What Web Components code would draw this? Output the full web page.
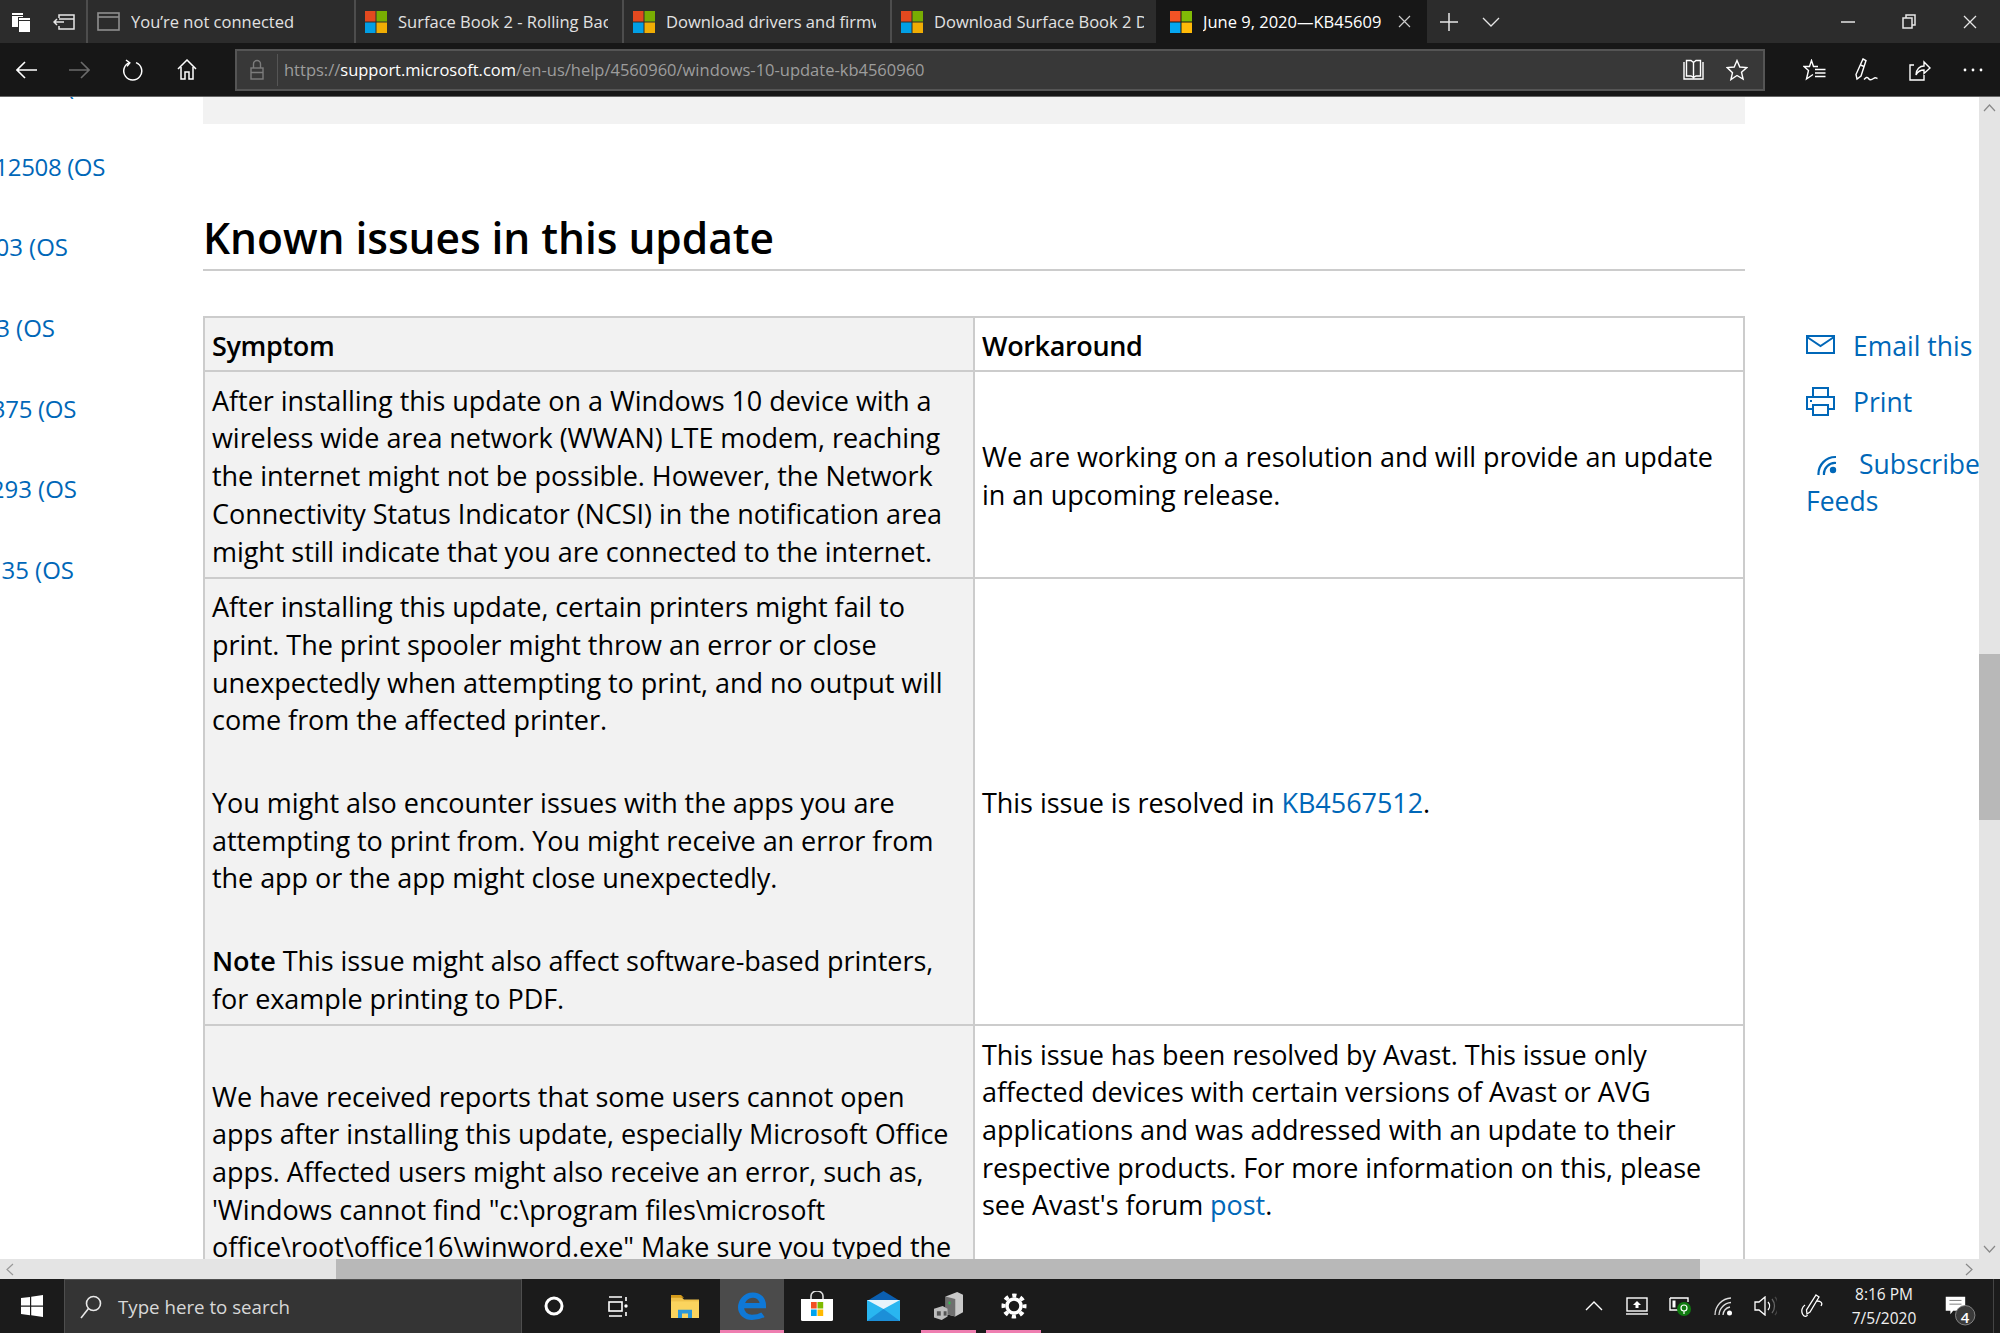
<!DOCTYPE html>
<html>
<head>
<meta charset="utf-8">
<title>Known issues</title>
<style>
  html, body { margin: 0; padding: 0; height: 100%; overflow: hidden; background: #fff; }
  body { font-family: "Open Sans", "Noto Sans", sans-serif; display: flex; flex-direction: column; height: 1333px; width: 2000px; }
  a { color: #0067b8; text-decoration: none; }
  p { margin: 0 0 45px; }
  p:last-child { margin-bottom: 0; }
  b { font-weight: 600; }
  nav-bar b { font-weight: 400; color: #fff; }
</style>
</head>
<body>

<tab-strip>
  <icon-btn w="42" slot="left" name="tabs"></icon-btn>
  <icon-btn w="44" slot="left" name="tabback"></icon-btn>
  <browser-tab name="window" sep>You’re not connected</browser-tab>
  <browser-tab name="ms" sep>Surface Book 2 - Rolling Back</browser-tab>
  <browser-tab name="ms" sep>Download drivers and firmware</browser-tab>
  <browser-tab name="ms" wide>Download Surface Book 2 Dr</browser-tab>
  <browser-tab name="ms" active>June 9, 2020—KB45609</browser-tab>
  <icon-btn w="44" name="plus"></icon-btn>
  <icon-btn w="40" name="chev"></icon-btn>
  <icon-btn w="61" slot="right" name="min"></icon-btn>
  <icon-btn w="61" slot="right" name="restore"></icon-btn>
  <icon-btn w="61" slot="right" name="close"></icon-btn>
</tab-strip>

<nav-bar>
  <icon-btn w="53" h="53" name="back" slot="nav"></icon-btn>
  <icon-btn w="53" h="53" name="forward" slot="nav"></icon-btn>
  <icon-btn w="54" h="53" name="refresh" slot="nav"></icon-btn>
  <icon-btn w="53" h="53" name="home" slot="nav"></icon-btn>
  <span slot="url">https://<b>support.microsoft.com</b>/en-us/help/4560960/windows-10-update-kb4560960</span>
  <icon-btn w="43" h="40" name="reading" slot="inbox"></icon-btn>
  <icon-btn w="43" h="40" name="star" slot="inbox"></icon-btn>
  <icon-btn w="52" h="53" name="favlist" slot="tools"></icon-btn>
  <icon-btn w="53" h="53" name="inkpen" slot="tools"></icon-btn>
  <icon-btn w="53" h="53" name="share" slot="tools"></icon-btn>
  <icon-btn w="54" h="53" name="dots" slot="tools"></icon-btn>
</nav-bar>

<page-view>
  <side-nav slot="nav">
    <nav-link w="106">(OS</nav-link>
    <nav-link w="105" style="letter-spacing:-0.35px">12508 (OS</nav-link>
    <nav-link w="68">03 (OS</nav-link>
    <nav-link w="55">3 (OS</nav-link>
    <nav-link w="76" style="letter-spacing:-0.3px">375 (OS</nav-link>
    <nav-link w="77">293 (OS</nav-link>
    <nav-link w="74">35 (OS</nav-link>
  </side-nav>

  <article-body slot="main">
    <issue-table>
      <issue-row head>
        <span slot="symptom">Symptom</span>
        <span slot="workaround">Workaround</span>
      </issue-row>
      <issue-row>
        <div slot="symptom">After installing this update on a Windows 10 device with a<br>wireless wide area network (WWAN) LTE modem, reaching<br>the internet might not be possible. However, the Network<br>Connectivity Status Indicator (NCSI) in the notification area<br>might still indicate that you are connected to the internet.</div>
        <div slot="workaround">We are working on a resolution and will provide an update<br>in an upcoming release.</div>
      </issue-row>
      <issue-row>
        <div slot="symptom">
          <p>After installing this update, certain printers might fail to<br>print. The print spooler might throw an error or close<br>unexpectedly when attempting to print, and no output will<br>come from the affected printer.</p>
          <p>You might also encounter issues with the apps you are<br>attempting to print from. You might receive an error from<br>the app or the app might close unexpectedly.</p>
          <p><b>Note</b> This issue might also affect software-based printers,<br>for example printing to PDF.</p>
        </div>
        <div slot="workaround">This issue is resolved in <a>KB4567512</a>.</div>
      </issue-row>
      <issue-row top>
        <div slot="symptom" class="lead">We have received reports that some users cannot open<br>apps after installing this update, especially Microsoft Office<br>apps. Affected users might also receive an error, such as,<br>'Windows cannot find "c:\program files\microsoft<br>office\root\office16\winword.exe" Make sure you typed the</div>
        <div slot="workaround">This issue has been resolved by Avast. This issue only<br>affected devices with certain versions of Avast or AVG<br>applications and was addressed with an update to their<br>respective products. For more information on this, please<br>see Avast's forum <a>post</a>.</div>
      </issue-row>
    </issue-table>
  </article-body>

  <share-links slot="aside"></share-links>
</page-view>

<h-scroll></h-scroll>

<task-bar>
  <task-slot w="64" name="win"></task-slot>
  <search-box></search-box>
  <task-slot w="64" name="cortana"></task-slot>
  <task-slot w="64" name="taskview"></task-slot>
  <task-slot w="70" name="explorer"></task-slot>
  <task-slot w="64" name="edge" active open="0"></task-slot>
  <task-slot w="66" name="store"></task-slot>
  <task-slot w="66" name="mail"></task-slot>
  <task-slot w="65" name="appbox" open="5"></task-slot>
  <task-slot w="65" name="gear" open="5"></task-slot>
  <task-slot w="42" name="caret" slot="tray"></task-slot>
  <task-slot w="43" name="screen" slot="tray"></task-slot>
  <task-slot w="44" name="battery" slot="tray"></task-slot>
  <task-slot w="42" name="wifi" slot="tray"></task-slot>
  <task-slot w="42" name="volume" slot="tray"></task-slot>
  <task-slot w="52" name="pen" slot="tray"></task-slot>
  <tray-clock slot="tray"></tray-clock>
  <task-slot w="50" name="notify" slot="tray"></task-slot>
</task-bar>

<script>
const msLogo = (a, b, c, d) => `<svg width="22" height="22" viewBox="0 0 22 22"><rect width="10.5" height="10.5" fill="${a}"/><rect x="11.5" width="10.5" height="10.5" fill="${b}"/><rect y="11.5" width="10.5" height="10.5" fill="${c}"/><rect x="11.5" y="11.5" width="10.5" height="10.5" fill="${d}"/></svg>`;

const line = 'fill="none" stroke="currentColor"';

const ICONS = {
  tabs: `<svg width="20" height="20" viewBox="0 0 20 20"><path d="M1 1h11v4h-5v10H1z" fill="#fff"/><path d="M8 6h11v14H8z" fill="#fff"/><path d="M8 8.5h11" stroke="#2b2b2b"/><path d="M1 3.5h11" stroke="#2b2b2b"/></svg>`,
  tabback: `<svg width="22" height="16" viewBox="0 0 22 16" ${line} stroke-width="1.5"><path d="M6 4V1h15v14H6v-3"/><path d="M6 5h15"/><path d="M11 8H1M4 5L1 8l3 3"/></svg>`,
  window: `<svg width="23" height="19" viewBox="0 0 23 19" fill="none" stroke="#8f8f8f" stroke-width="1.6"><rect x="1" y="1" width="21" height="17"/><path d="M1 5h21"/></svg>`,
  ms: msLogo('#e2491f', '#78ad02', '#029fe5', '#f0ad04'),
  msOn: msLogo('#f35325', '#81bc06', '#05a6f0', '#ffba08'),
  plus: `<svg width="18" height="18" viewBox="0 0 18 18" ${line} stroke-width="1.5"><path d="M9 0v18M0 9h18"/></svg>`,
  chev: `<svg width="18" height="10" viewBox="0 0 18 10" ${line} stroke-width="1.3"><path d="M1 1l8 8 8-8"/></svg>`,
  min: `<svg width="14" height="2" viewBox="0 0 14 2" ${line} stroke-width="1.5"><path d="M0 1h14"/></svg>`,
  restore: `<svg width="14" height="15" viewBox="0 0 14 15" ${line} stroke-width="1.5"><rect x="1" y="4" width="9" height="10"/><path d="M4 4V1h9v10h-3"/></svg>`,
  close: `<svg width="14" height="14" viewBox="0 0 14 14" ${line} stroke-width="1.3"><path d="M1 1l12 12M13 1L1 13"/></svg>`,
  smallx: `<svg width="13" height="13" viewBox="0 0 13 13" ${line} stroke-width="1.2"><path d="M1 1l11 11M12 1L1 12"/></svg>`,
  back: `<svg width="21" height="18" viewBox="0 0 21 18" fill="none" stroke="#fff" stroke-width="1.6"><path d="M21 9H1M9 1L1 9l8 8"/></svg>`,
  forward: `<svg width="21" height="18" viewBox="0 0 21 18" fill="none" stroke="#6b6b6b" stroke-width="1.6"><path d="M0 9h20M12 1l8 8-8 8"/></svg>`,
  refresh: `<svg width="20" height="22" viewBox="0 0 20 22" fill="none" stroke="#fff" stroke-width="1.5"><path d="M13 3.6a9 9 0 1 1-6.5 0"/><path d="M3 1l3.8 2.8L4 7.4"/></svg>`,
  home: `<svg width="20" height="21" viewBox="0 0 20 21" fill="none" stroke="#fff" stroke-width="1.5"><path d="M1 10l9-9 9 9"/><path d="M4 8v12h4v-7h4v7h4V8"/></svg>`,
  lock: `<svg width="14" height="21" viewBox="0 0 14 21" fill="none" stroke="#7c7c7c" stroke-width="1.4"><rect x="1" y="9" width="12" height="11"/><path d="M3.5 9V5a3.5 3.5 0 0 1 7 0v4M1 13.5h12"/></svg>`,
  reading: `<svg width="21" height="21" viewBox="0 0 21 21" fill="none" stroke="#fff" stroke-width="1.4"><path d="M1 3v17h19V3"/><path d="M3.500 1.500h4.500l2.500 2v15l-2.500-1.500H3.500zM17.500 1.500H13l-2.500 2v15l2.500-1.500h4.500z"/></svg>`,
  star: `<svg width="22" height="22" viewBox="0 0 22 22" fill="none" stroke="#fff" stroke-width="1.4"><path d="M11 1.500l2.800 6.500 7 .6-5.300 4.600 1.600 6.900L11 16.500 4.900 20.600l1.600-6.900L1.200 8.600l7-.6z"/></svg>`,
  favlist: `<svg width="23" height="22" viewBox="0 0 23 22" fill="none" stroke="#fff" stroke-width="1.4"><path d="M15 7.500h-4.500L8.500 1.500 6.500 7.500H1l4.500 4L3.500 20l6.500-4.500"/><path d="M12 10.500h10.500M12 14h10.500M12 17.500h10.500"/></svg>`,
  inkpen: `<svg width="23" height="24" viewBox="0 0 23 24" fill="none" stroke="#fff" stroke-width="1.4"><path d="M8 1l3 1.500-5 15.500-4 3-1-4.500z"/><path d="M5.500 7l3.500 1.500M9 21.500c2-2 3-3 4.500-1s3 1.500 5 0 2.500-.5 4 0"/></svg>`,
  share: `<svg width="22" height="22" viewBox="0 0 22 22" fill="none" stroke="#fff" stroke-width="1.4"><path d="M5 6H1v15h14v-5"/><path d="M7 16c0-6 4-9 8-9V3l6 6-6 5.500V11c-3 0-6 1-8 5z"/></svg>`,
  dots: `<svg width="20" height="4" viewBox="0 0 20 4" fill="#fff"><circle cx="2" cy="2" r="1.400"/><circle cx="10" cy="2" r="1.400"/><circle cx="18" cy="2" r="1.400"/></svg>`,
  win: `<svg width="22" height="22" viewBox="0 0 22 22" fill="#fff"><path d="M0 3.100L9 1.900V10.500H0zM10.200 1.700L22 0V10.500H10.200zM0 11.700H9v8.500L0 19zM10.200 11.700H22V22l-11.800-1.700z"/></svg>`,
  search: `<svg width="22" height="24" viewBox="0 0 22 24" fill="none" stroke="#e8e8e8" stroke-width="1.600"><circle cx="13.500" cy="8.500" r="7"/><path d="M8.500 13.500L1 23"/></svg>`,
  cortana: `<svg width="20" height="20" viewBox="0 0 20 20" fill="none" stroke="#fff" stroke-width="3"><circle cx="10" cy="10" r="8"/></svg>`,
  taskview: `<svg width="21" height="21" viewBox="0 0 21 21" fill="none" stroke="#fff" stroke-width="1.600"><path d="M1 1h13M1 20h13"/><rect x="1" y="6" width="13" height="9"/><path d="M18 1v4M18 16v4" /><circle cx="18" cy="10" r="1.700" fill="#fff" stroke="none"/></svg>`,
  explorer: `<svg width="28" height="24" viewBox="0 0 28 26" preserveAspectRatio="none"><path d="M0 3h10l3 3h15v20H0z" fill="#f0c24b"/><path d="M0 1h10l3 3H0z" fill="#d49a1a"/><path d="M0 8h28v18H0z" fill="#fbd45e"/><path d="M7 26v-9h14v9h-4v-5h-6v5z" fill="#2c97d8"/></svg>`,
  edge: `<svg width="28" height="28" viewBox="0 0 28 32" preserveAspectRatio="none" fill="none" stroke="#0f78d6" stroke-width="6"><path d="M6 15.500h19c0-7-4-12-10-12-8 0-12 8-12 14 0 7 5 11.500 11 11.500 4 0 8-1 11-3"/></svg>`,
  store: `<svg width="32" height="30" viewBox="0 0 32 30"><path d="M10 8V5a6 5 0 0 1 12 0v3" fill="none" stroke="#ddd" stroke-width="1.600"/><path d="M0 8h32v20.500a1.500 1.500 0 0 1-1.500 1.500h-29A1.500 1.500 0 0 1 0 28.500z" fill="#fff"/><rect x="10" y="11" width="5.700" height="6.500" fill="#f25022"/><rect x="16.500" y="11" width="5.700" height="6.500" fill="#7fba00"/><rect x="10" y="18.500" width="5.700" height="6.500" fill="#00a4ef"/><rect x="16.500" y="18.500" width="5.700" height="6.500" fill="#ffb900"/></svg>`,
  mail: `<svg width="33" height="30" viewBox="0 0 33 30"><path d="M16.500 0L33 10v20H0V10z" fill="#0b5fb0"/><path d="M0 9h33v21H0z" fill="#29b6f0"/><path d="M0 9l16.500 9L33 9H0z" fill="#e6f4fb"/><path d="M0 30l16.500-12L33 30z" fill="#1c8fd8"/></svg>`,
  appbox: `<svg width="29" height="28" viewBox="0 0 30 32" preserveAspectRatio="none"><path d="M12 5l12-5 6 3v20l-8 5-10-3z" fill="#c9c9c9"/><path d="M12 5l10 3v20l-10-3z" fill="#6f6f6f"/><rect x="15" y="11" width="2" height="3" fill="#2bc24b"/><path d="M0 19l9-3 5 3v9l-6 4-8-3z" fill="#bdbdbd"/><rect x="3" y="22" width="4" height="5" fill="#555"/><rect x="10" y="22" width="3" height="5" fill="#555"/></svg>`,
  gear: `<svg width="26" height="26" viewBox="0 0 26 26" fill="none" stroke="#fff"><circle cx="13" cy="13" r="7" stroke-width="3.500"/><circle cx="13" cy="13" r="10.500" stroke-width="4" stroke-dasharray="4.200 4.050" stroke-dashoffset="2.100"/></svg>`,
  caret: `<svg width="18" height="10" viewBox="0 0 18 10" ${line} stroke-width="1.400"><path d="M1 9l8-8 8 8"/></svg>`,
  screen: `<svg width="22" height="18" viewBox="0 0 22 18" fill="none" stroke="#fff" stroke-width="1.400"><rect x="1" y="1" width="20" height="13"/><path d="M0 17h22"/><path d="M11 4l4 4h-2.500v3h-3V8H7z" fill="#fff" stroke="none"/></svg>`,
  battery: `<svg width="22" height="22" viewBox="0 0 22 22"><path d="M1 3h18v4M1 3v12h9" fill="none" stroke="#fff" stroke-width="1.400"/><rect x="3.500" y="5.500" width="3" height="7" fill="#fff"/><circle cx="15" cy="14" r="7" fill="#107c10"/><circle cx="15" cy="13" r="3" fill="none" stroke="#fff" stroke-width="1.200"/><path d="M15 16v3" stroke="#fff" stroke-width="1.200"/></svg>`,
  wifi: `<svg width="19" height="19" viewBox="0 0 19 19" fill="none" stroke="#ddd" stroke-width="1.300"><path d="M1 18A17 17 0 0 1 17 1"/><path d="M5 18A13 13 0 0 1 17 5.500"/><path d="M9 18A9 9 0 0 1 16 10"/><circle cx="15.500" cy="16" r="2.500" fill="#fff" stroke="none"/></svg>`,
  volume: `<svg width="23" height="20" viewBox="0 0 23 20" fill="none" stroke="#fff" stroke-width="1.300"><path d="M1 6h4l6-5v18l-6-5H1z"/><path d="M14 6a6 6 0 0 1 0 8"/><path d="M18 3a11 11 0 0 1 0 14" stroke="#666"/><path d="M21 1a14 14 0 0 1 0 18" stroke="#444"/></svg>`,
  pen: `<svg width="22" height="24" viewBox="0 0 22 24" fill="none" stroke="#fff" stroke-width="1.300"><path d="M15 1l3 2L9 18l-3 2-.5-4z"/><path d="M4 11C1 13 0 17 1.500 20s4 3 5 1M16 7c4 0 6 2 4 5"/></svg>`,
  notify: `<svg width="54" height="52" viewBox="-16 -15 54 52"><path d="M1 1h21v15H9l-3 4v-4H1z" fill="#fff"/><path d="M5 5h13M5 9h13" stroke="#777" stroke-width="1"/><circle cx="22" cy="21" r="10.500" fill="#3a3a3a" stroke="#888" stroke-width="1"/></svg>`,
  mailto: `<svg width="29" height="19" viewBox="0 0 29 19" fill="none" stroke="#0067b8" stroke-width="2" style="margin-top:-5px"><rect x="1" y="1" width="27" height="17"/><path d="M1 2l13.500 9L28 2"/></svg>`,
  printer: `<svg width="29" height="29" viewBox="0 0 29 29" fill="none" stroke="#0067b8" stroke-width="2" style="margin-top:-2px"><path d="M7 10V1h15v9"/><path d="M7 22H1V10h27v12h-6"/><rect x="7" y="18" width="15" height="10"/><path d="M4 14h2"/></svg>`,
  rss: `<svg width="20" height="20" viewBox="0 0 20 20" fill="none" stroke="#0067b8" stroke-width="2.200"><path d="M1.500 20A17 17 0 0 1 19 2"/><path d="M7 20A11 11 0 0 1 19 8"/><circle cx="16" cy="15" r="3.200" fill="#0067b8" stroke="none"/></svg>`
};

class IconBtn extends HTMLElement {
  connectedCallback() {
    const w = this.getAttribute('w') || 40;
    const h = this.getAttribute('h') || 43;
    this.attachShadow({mode: 'open'});
    this.shadowRoot.innerHTML = `
      <style>
        :host { display: flex; align-items: center; justify-content: center; flex: none; width: ${w}px; height: ${h}px; color: #e6e6e6; }
        svg { display: block; }
      </style>
      ${ICONS[this.getAttribute('name')]}`;
  }
}

class TabStrip extends HTMLElement {
  connectedCallback() {
    this.attachShadow({mode: 'open'});
    this.shadowRoot.innerHTML = `
      <style>
        :host { display: flex; flex: none; height: 43px; background: #2c2c2c; color: #e6e6e6; }
        .grow { flex: 1; }
        .left, .right { display: flex; }
      </style>
      <div class="left"><slot name="left"></slot></div>
      <slot></slot>
      <div class="grow"></div>
      <div class="right"><slot name="right"></slot></div>`;
  }
}

class BrowserTab extends HTMLElement {
  connectedCallback() {
    const active = this.hasAttribute('active');
    const name = this.getAttribute('name');
    const w = active ? 271 : this.hasAttribute('wide') ? 266 : 268;
    this.attachShadow({mode: 'open'});
    this.shadowRoot.innerHTML = `
      <style>
        :host { display: flex; flex: none; align-items: center; box-sizing: border-box; width: ${w}px; height: 43px;
                padding-left: ${active ? 14 : 11}px; background: ${active ? '#171717' : 'transparent'}; position: relative; }
        :host::before { content: ""; position: absolute; left: 0; top: 0; bottom: 0; width: 1.500px; background: ${this.hasAttribute('sep') || this.hasAttribute('wide') ? '#4d4d4d' : 'transparent'}; }
        .ico { flex: none; width: ${name === 'window' ? 34 : 33}px; }
        .ico svg { display: block; }
        .txt { flex: none; width: ${active ? 184 : 210}px; overflow: hidden; white-space: nowrap; font-size: 16.500px; letter-spacing: 0; color: ${active ? '#fff' : '#e2e2e2'}; }
        .x { margin-left: 11px; color: #ccc; display: flex; }
      </style>
      <span class="ico">${active ? ICONS.msOn : ICONS[name]}</span>
      <span class="txt"><slot></slot></span>
      ${active ? `<span class="x">${ICONS.smallx}</span>` : ''}`;
  }
}

class NavBar extends HTMLElement {
  connectedCallback() {
    this.attachShadow({mode: 'open'});
    this.shadowRoot.innerHTML = `
      <style>
        :host { display: flex; flex: none; align-items: center; height: 54px; box-sizing: border-box; background: #171717; border-bottom: 1px solid #666; }
        .group { display: flex; flex: none; }
        .addr { display: flex; flex: none; align-items: center; box-sizing: border-box; width: 1530px; height: 42px; margin: 0 23px 0 22px;
                background: #383838; border: 2px solid #555; }
        .lock { display: flex; flex: none; align-items: center; justify-content: center; box-sizing: border-box; width: 41px; height: 32px; border-right: 1.500px solid #555; }
        .url { flex: 1; padding-left: 6px; font-size: 16.500px; color: #9d9d9d; white-space: nowrap; }
      </style>
      <div class="group"><slot name="nav"></slot></div>
      <div class="addr">
        <span class="lock">${ICONS.lock}</span>
        <div class="url"><slot name="url"></slot></div>
        <div class="group"><slot name="inbox"></slot></div>
        <div style="width:5px"></div>
      </div>
      <div class="group"><slot name="tools"></slot></div>`;
  }
}

class PageView extends HTMLElement {
  connectedCallback() {
    this.attachShadow({mode: 'open'});
    this.shadowRoot.innerHTML = `
      <style>
        :host { display: flex; flex: none; height: 1162px; width: 2000px; overflow: hidden; background: #fff; color: #000; }
        .doc { display: grid; grid-template-columns: 203px 1542px 234px; width: 1979px; height: 1162px; overflow: hidden; }
        .bar { display: flex; flex-direction: column; justify-content: space-between; width: 21px; height: 1162px; background: #e4e4e4; position: relative; }
        .arrow { height: 21px; display: flex; align-items: center; justify-content: center; }
        .thumb { position: absolute; left: 0; right: 0; top: 557px; height: 166px; background: #b8b8b8; }
      </style>
      <div class="doc">
        <slot name="nav"></slot>
        <slot name="main"></slot>
        <slot name="aside"></slot>
      </div>
      <div class="bar">
        <div class="arrow"><svg width="13" height="8" viewBox="0 0 13 8" fill="none" stroke="#888" stroke-width="1.200"><path d="M1 7l5.500-6L12 7"/></svg></div>
        <div class="thumb"></div>
        <div class="arrow"><svg width="13" height="8" viewBox="0 0 13 8" fill="none" stroke="#888" stroke-width="1.200"><path d="M1 1l5.500 6L12 1"/></svg></div>
      </div>`;
  }
}

class SideNav extends HTMLElement {
  connectedCallback() {
    this.attachShadow({mode: 'open'});
    this.shadowRoot.innerHTML = `
      <style>
        :host { display: flex; flex-direction: column; gap: 48.700px; margin-top: -27px; font-size: 24px; line-height: 32px; color: #0067b8; }
      </style>
      <slot></slot>`;
  }
}

class NavLink extends HTMLElement {
  connectedCallback() {
    this.attachShadow({mode: 'open'});
    this.shadowRoot.innerHTML = `
      <style>
        :host { display: flex; justify-content: flex-end; width: ${this.getAttribute('w')}px; overflow: hidden; white-space: nowrap; }
      </style>
      <slot></slot>`;
  }
}

class ArticleBody extends HTMLElement {
  connectedCallback() {
    this.attachShadow({mode: 'open'});
    this.shadowRoot.innerHTML = `
      <style>
        :host { display: block; }
        .strip { height: 27px; background: #f2f2f2; }
        h2 { margin: 0; height: 146.500px; box-sizing: border-box; padding-top: 89px; border-bottom: 2px solid #ccc; font-size: 42.500px; line-height: 50px; font-weight: 600; letter-spacing: -0.05px; color: #000; white-space: nowrap; }
        .gap { height: 45.500px; }
      </style>
      <div class="strip"></div>
      <h2>Known issues in this update</h2>
      <div class="gap"></div>
      <slot></slot>`;
  }
}

class IssueTable extends HTMLElement {
  connectedCallback() {
    this.attachShadow({mode: 'open'});
    this.shadowRoot.innerHTML = `
      <style>
        :host { display: block; border: 2px solid #ccc; border-bottom: 0; font-size: 27px; line-height: 37.700px; letter-spacing: -0.05px; }
      </style>
      <slot></slot>`;
  }
}

class IssueRow extends HTMLElement {
  connectedCallback() {
    const head = this.hasAttribute('head');
    const top = this.hasAttribute('top');
    this.attachShadow({mode: 'open'});
    this.shadowRoot.innerHTML = `
      <style>
        :host { display: grid; grid-template-columns: 770px 1fr; border-bottom: 2px solid #ccc; white-space: nowrap; ${head ? 'font-weight: 600; letter-spacing: -0.35px;' : ''} }
        .cell { display: flex; flex-direction: column; justify-content: ${top ? 'flex-start' : 'center'}; box-sizing: border-box; padding: ${head ? '9px 8px 5.500px' : '9.500px 8px 6.500px'}; }
        .sym { background: #f2f2f2; border-right: 2px solid #ccc; padding-left: 7px; ${top ? 'padding-top: 51.500px;' : ''} }
        .wrk { padding-left: 7px; }
        ::slotted(*) { display: block; }
      </style>
      <div class="cell sym"><slot name="symptom"></slot></div>
      <div class="cell wrk"><slot name="workaround"></slot></div>`;
  }
}

class ShareLinks extends HTMLElement {
  connectedCallback() {
    this.attachShadow({mode: 'open'});
    this.shadowRoot.innerHTML = `
      <style>
        :host { display: block; padding: 231px 0 0 61px; font-size: 26.500px; line-height: 37px; letter-spacing: 0; color: #0067b8; white-space: nowrap; }
        .row { display: flex; align-items: center; margin-bottom: 19px; }
        .ico { flex: none; width: 47px; display: flex; }
        .sub { margin-top: 25px; }
        .sub svg { margin: 0 22px 0 11px; vertical-align: -1px; }
      </style>
      <div class="row"><span class="ico">${ICONS.mailto}</span>Email this</div>
      <div class="row"><span class="ico">${ICONS.printer}</span>Print</div>
      <div class="sub">${ICONS.rss}Subscribe<br>Feeds</div>`;
  }
}

class HScroll extends HTMLElement {
  connectedCallback() {
    this.attachShadow({mode: 'open'});
    this.shadowRoot.innerHTML = `
      <style>
        :host { display: flex; flex: none; align-items: center; height: 20px; background: #e4e4e4; }
        .end { flex: none; display: flex; align-items: center; }
        .l { width: 336px; padding-left: 6px; box-sizing: border-box; }
        .r { width: 300px; justify-content: flex-end; padding-right: 27px; box-sizing: border-box; }
        .thumb { flex: 1; height: 20px; background: #b8b8b8; }
      </style>
      <div class="end l"><svg width="8" height="13" viewBox="0 0 8 13" fill="none" stroke="#999" stroke-width="1.200"><path d="M7 1L1 6.500 7 12"/></svg></div>
      <div class="thumb"></div>
      <div class="end r"><svg width="8" height="13" viewBox="0 0 8 13" fill="none" stroke="#888" stroke-width="1.200"><path d="M1 1l6 5.500L1 12"/></svg></div>`;
  }
}

class TaskBar extends HTMLElement {
  connectedCallback() {
    this.attachShadow({mode: 'open'});
    this.shadowRoot.innerHTML = `
      <style>
        :host { display: flex; flex: none; height: 54px; background: #1b1b1b; color: #fff; }
        .tray { display: flex; margin-left: auto; }
        .edge { width: 7px; border-left: 1.500px solid #444; box-sizing: border-box; }
      </style>
      <slot></slot>
      <div class="tray"><slot name="tray"></slot></div>
      <div style="width:13px"></div>
      <div class="edge"></div>`;
  }
}

class TaskSlot extends HTMLElement {
  connectedCallback() {
    const open = this.getAttribute('open');
    const name = this.getAttribute('name');
    this.attachShadow({mode: 'open'});
    this.shadowRoot.innerHTML = `
      <style>
        :host { display: flex; flex: none; align-items: center; justify-content: center; position: relative; width: ${this.getAttribute('w')}px; height: 54px;
                background: ${this.hasAttribute('active') ? '#4b4b4b' : 'transparent'}; }
        svg { display: block; }
        .run { position: absolute; bottom: 0; left: ${open || 0}px; right: ${open || 0}px; height: 3px; background: #ee7eb0; }
        .num { position: absolute; left: 24px; top: 27px; width: 22px; text-align: center; font-size: 15px; line-height: 22px; font-weight: 600; color: #fff; }
      </style>
      ${ICONS[name]}
      ${open !== null ? '<div class="run"></div>' : ''}
      ${name === 'notify' ? '<span class="num">4</span>' : ''}`;
  }
}

class SearchBox extends HTMLElement {
  connectedCallback() {
    this.attachShadow({mode: 'open'});
    this.shadowRoot.innerHTML = `
      <style>
        :host { display: flex; flex: none; align-items: center; box-sizing: border-box; width: 458px; height: 54px; padding-left: 15px; background: #343434; border: 1.500px solid #4e4e4e; border-bottom: 0; font-size: 18.700px; color: #d8d8d8; }
        .i { display: flex; margin-right: 16px; }
      </style>
      <span class="i">${ICONS.search}</span>Type here to search`;
  }
}

class TrayClock extends HTMLElement {
  connectedCallback() {
    this.attachShadow({mode: 'open'});
    this.shadowRoot.innerHTML = `
      <style>
        :host { display: flex; flex: none; flex-direction: column; align-items: center; justify-content: center; width: 92px; height: 54px; font-size: 15.500px; line-height: 24.500px; color: #f0f0f0; }
      </style>
      <span>8:16 PM</span><span>7/5/2020</span>`;
  }
}

customElements.define('icon-btn', IconBtn);
customElements.define('tab-strip', TabStrip);
customElements.define('browser-tab', BrowserTab);
customElements.define('nav-bar', NavBar);
customElements.define('page-view', PageView);
customElements.define('side-nav', SideNav);
customElements.define('nav-link', NavLink);
customElements.define('article-body', ArticleBody);
customElements.define('issue-table', IssueTable);
customElements.define('issue-row', IssueRow);
customElements.define('share-links', ShareLinks);
customElements.define('h-scroll', HScroll);
customElements.define('task-bar', TaskBar);
customElements.define('task-slot', TaskSlot);
customElements.define('search-box', SearchBox);
customElements.define('tray-clock', TrayClock);
</script>
</body>
</html>
